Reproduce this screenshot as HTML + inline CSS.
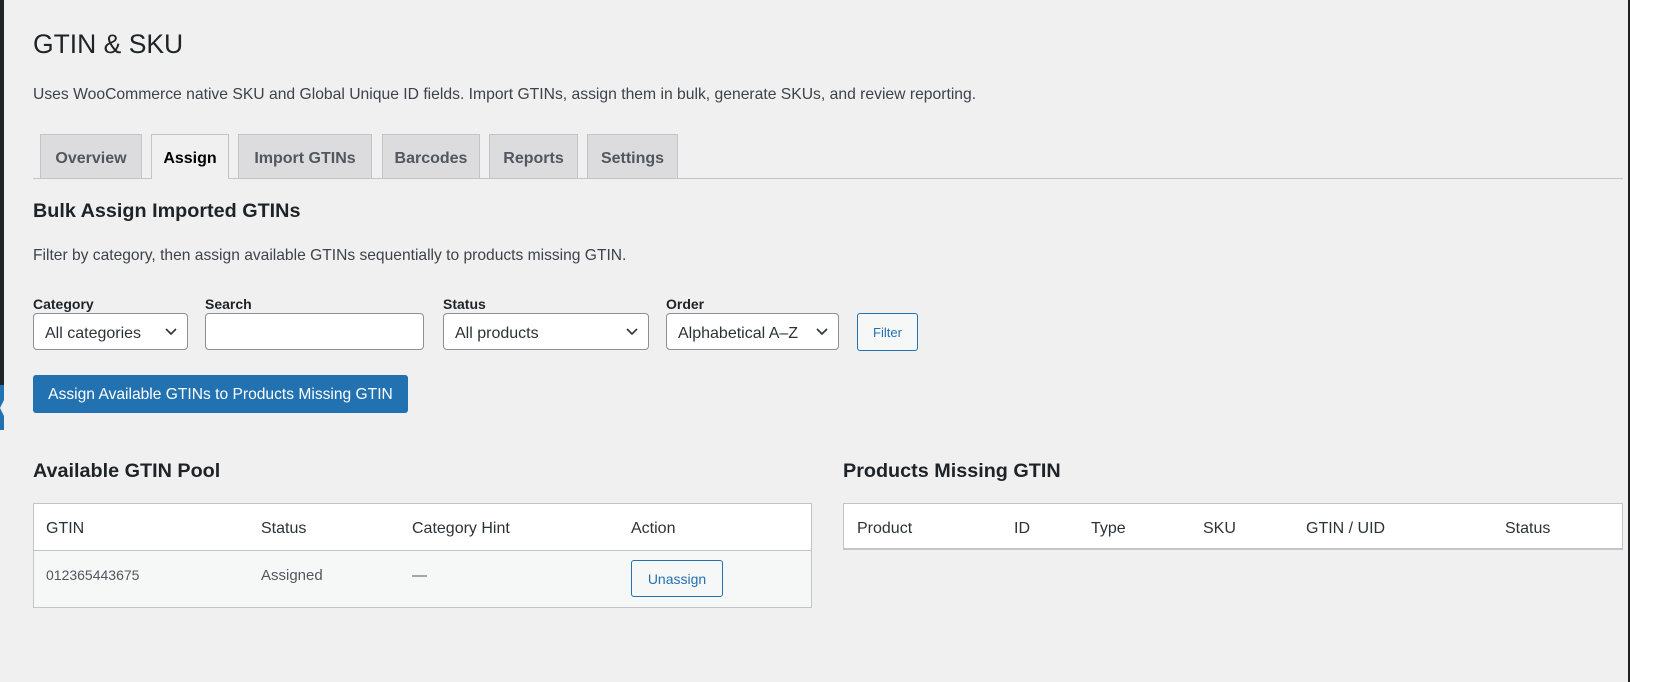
<!DOCTYPE html>
<html><head><meta charset="utf-8"><style>
*{box-sizing:border-box;margin:0;padding:0}
body{width:1653px;height:682px;background:#f0f0f1;font-family:"Liberation Sans",sans-serif;color:#3c434a;position:relative;overflow:hidden;font-size:14px}
.a{position:absolute;white-space:nowrap}
.lbar{position:absolute;left:0;top:0;width:4px;height:385px;background:#1d2327}
.lblue{position:absolute;left:0;top:385px;width:4px;height:45px;background:#2271b1}
.notch{position:absolute;left:0;top:400px;width:0;height:0;border-top:8px solid transparent;border-bottom:8px solid transparent;border-right:4px solid #f0f0f1}
.rbar{position:absolute;left:1628px;top:0;width:2px;height:682px;background:#1d2327}
.rw{position:absolute;left:1630px;top:0;width:23px;height:682px;background:#fff}
h1{position:absolute;left:33px;top:29px;font-size:26.5px;font-weight:400;color:#1d2327}
.tab{position:absolute;top:134px;height:44px;background:#dcdcde;border:1px solid #c3c4c7;border-bottom:none;font-weight:600;font-size:16px;color:#50575e;text-align:center;line-height:48px}
.tab.act{background:#f0f0f1;color:#000;height:45px}
.line{position:absolute;left:33px;top:178px;width:1590px;height:1px;background:#c3c4c7}
h2{position:absolute;font-size:19.8px;font-weight:600;color:#1d2327;white-space:nowrap}
.lab{position:absolute;top:296px;font-size:14px;font-weight:600;color:#1d2327}
.sel{position:absolute;top:313px;height:37px;background:#fff;border:1px solid #8c8f94;border-radius:4px;font-size:16px;color:#2c3338;line-height:40px;padding-left:11px}
.sel svg{position:absolute;right:10px;top:14px}
.btn2{position:absolute;background:#f6f7f7;border:1px solid #2271b1;border-radius:3px;color:#2271b1;font-size:13px;text-align:center}
.tbl{position:absolute;background:#fff;border:1px solid #c3c4c7}
.th{position:absolute;top:16px;font-size:16px;color:#2c3338}
</style></head><body>
<div class="lbar"></div><div class="lblue"></div><div class="notch"></div>
<div class="rbar"></div><div class="rw"></div>
<h1>GTIN &amp; SKU</h1>
<div class="a" style="left:33px;top:86px;font-size:15.7px;color:#3c434a">Uses WooCommerce native SKU and Global Unique ID fields. Import GTINs, assign them in bulk, generate SKUs, and review reporting.</div>
<div class="tab" style="left:40px;width:102px">Overview</div>
<div class="tab" style="left:238px;width:134px">Import GTINs</div>
<div class="tab" style="left:382px;width:98px">Barcodes</div>
<div class="tab" style="left:489px;width:89px">Reports</div>
<div class="tab" style="left:587px;width:91px">Settings</div>
<div class="line"></div>
<div class="tab act" style="left:151px;width:78px">Assign</div>
<h2 style="left:33px;top:200px">Bulk Assign Imported GTINs</h2>
<div class="a" style="left:33px;top:247px;font-size:15.6px">Filter by category, then assign available GTINs sequentially to products missing GTIN.</div>
<div class="lab" style="left:33px">Category</div>
<div class="lab" style="left:205px">Search</div>
<div class="lab" style="left:443px">Status</div>
<div class="lab" style="left:666px">Order</div>
<div class="sel" style="left:33px;width:155px">All categories<svg width="12" height="8" viewBox="0 0 12 8"><path d="M1 1l5 5 5-5" fill="none" stroke="#2c3338" stroke-width="1.6"/></svg></div>
<div class="sel" style="left:205px;width:219px"></div>
<div class="sel" style="left:443px;width:206px">All products<svg width="12" height="8" viewBox="0 0 12 8"><path d="M1 1l5 5 5-5" fill="none" stroke="#2c3338" stroke-width="1.6"/></svg></div>
<div class="sel" style="left:666px;width:173px">Alphabetical A–Z<svg width="12" height="8" viewBox="0 0 12 8"><path d="M1 1l5 5 5-5" fill="none" stroke="#2c3338" stroke-width="1.6"/></svg></div>
<div class="btn2" style="left:857px;top:313px;width:61px;height:38px;line-height:38px">Filter</div>
<div class="a" style="left:33px;top:375px;width:375px;height:38px;background:#2271b1;border-radius:3px;color:#fff;font-size:15.6px;line-height:40px;text-align:center">Assign Available GTINs to Products Missing GTIN</div>
<h2 style="left:33px;top:460px">Available GTIN Pool</h2>
<h2 style="left:843px;top:460px">Products Missing GTIN</h2>
<div class="tbl" style="left:33px;top:503px;width:779px;height:105px">
 <div style="position:absolute;left:0;top:46px;width:777px;height:57px;background:#f6f7f7;border-top:1px solid #c3c4c7"></div>
 <div class="th" style="left:12px">GTIN</div>
 <div class="th" style="left:227px">Status</div>
 <div class="th" style="left:378px">Category Hint</div>
 <div class="th" style="left:597px">Action</div>
 <div class="a" style="left:12px;top:63px;font-size:14px;color:#50575e">012365443675</div>
 <div class="a" style="left:227px;top:63px;font-size:15px;color:#50575e">Assigned</div>
 <div class="a" style="left:378px;top:63px;font-size:15px;color:#50575e">—</div>
 <div class="btn2" style="left:597px;top:56px;width:92px;height:37px;line-height:37px;font-size:14px">Unassign</div>
</div>
<div class="tbl" style="left:843px;top:503px;width:780px;height:47px;border-bottom:2px solid #c3c4c7">
 <div class="th" style="left:13px">Product</div>
 <div class="th" style="left:170px">ID</div>
 <div class="th" style="left:247px">Type</div>
 <div class="th" style="left:359px">SKU</div>
 <div class="th" style="left:462px">GTIN / UID</div>
 <div class="th" style="left:661px">Status</div>
</div>
</body></html>
